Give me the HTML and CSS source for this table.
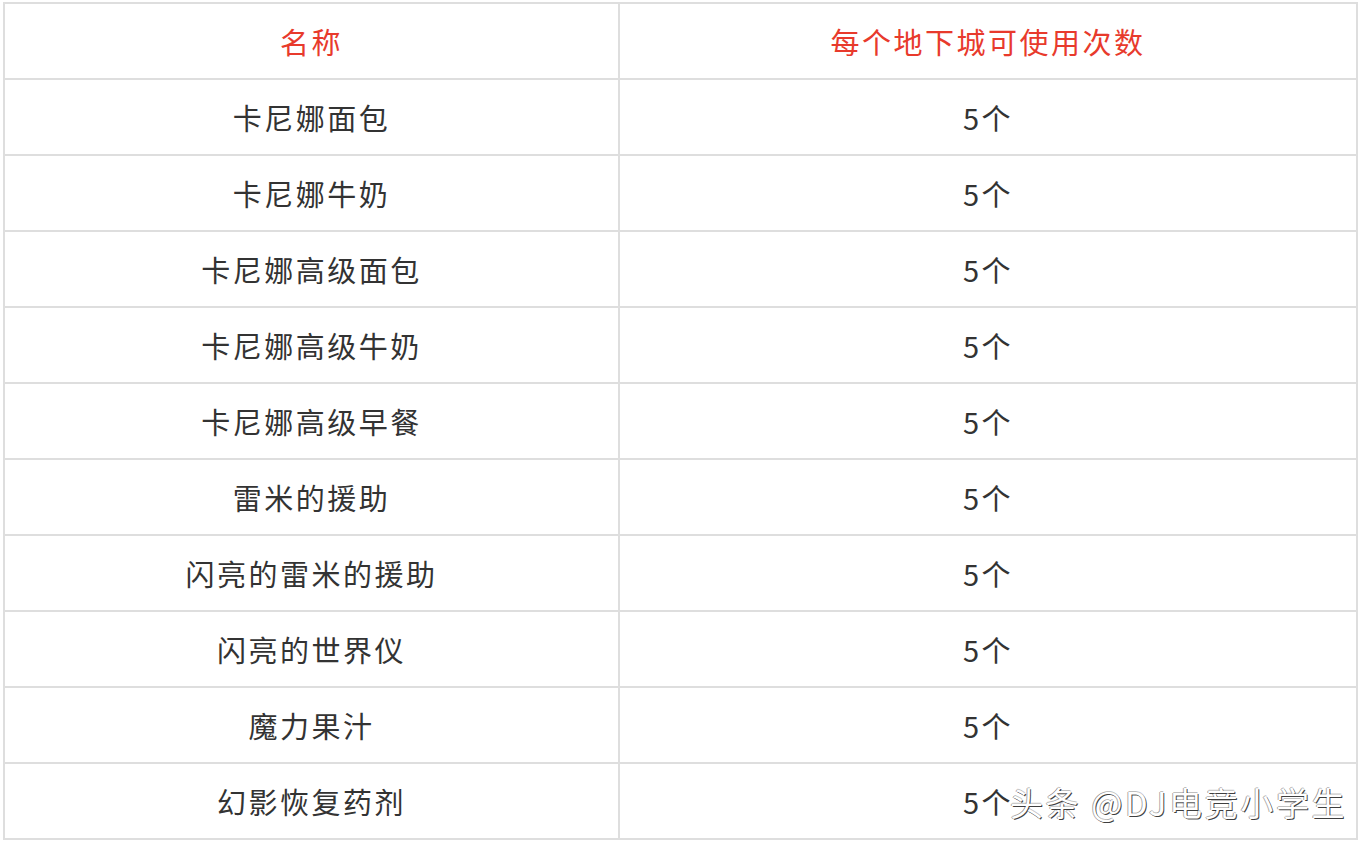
FILE: index.html
```html
<!DOCTYPE html>
<html lang="zh">
<head>
<meta charset="utf-8">
<link rel="stylesheet" href="styles.css">
</head>
<body>
<div class="wrap">
<table class="tbl">
  <thead>
    <tr><th class="c1">名称</th><th class="c2">每个地下城可使用次数</th></tr>
  </thead>
  <tbody>
    <tr><td>卡尼娜面包</td><td>5个</td></tr>
    <tr><td>卡尼娜牛奶</td><td>5个</td></tr>
    <tr><td>卡尼娜高级面包</td><td>5个</td></tr>
    <tr><td>卡尼娜高级牛奶</td><td>5个</td></tr>
    <tr><td>卡尼娜高级早餐</td><td>5个</td></tr>
    <tr><td>雷米的援助</td><td>5个</td></tr>
    <tr><td>闪亮的雷米的援助</td><td>5个</td></tr>
    <tr><td>闪亮的世界仪</td><td>5个</td></tr>
    <tr><td>魔力果汁</td><td>5个</td></tr>
    <tr><td>幻影恢复药剂</td><td>5个</td></tr>
  </tbody>
</table>
<div class="watermark">头条 @DJ电竞小学生</div>
</div>
</body>
</html>
```
FILE: styles.css
```css
html, body {
  margin: 0;
  padding: 0;
  background: #fff;
}
.wrap {
  position: relative;
  padding: 2px 0 0 3px;
  width: 1355px;
}
.tbl {
  border-collapse: collapse;
  width: 1355px;
  table-layout: fixed;
  font-family: "Noto Sans CJK SC", "Noto Sans", sans-serif;
  font-size: 29px;
  letter-spacing: 2.5px;
  color: #333;
}
.tbl th, .tbl td {
  border: 2px solid #dedede;
  height: 74px;
  padding: 0;
  text-align: center;
  vertical-align: middle;
  font-weight: 400;
}
.tbl th {
  color: #e83a2c;
}
.c1 { width: 613px; }
.watermark {
  position: absolute;
  left: 1010px;
  top: 780px;
  font-family: "Noto Sans CJK SC", sans-serif;
  font-size: 33px;
  line-height: 44px;
  color: #fff;
  letter-spacing: 2.6px;
  text-shadow: 1px 1px 0 rgba(0,0,0,0.75), -1px 0 0 rgba(0,0,0,0.35), 0 -1px 0 rgba(0,0,0,0.25);
}
```
